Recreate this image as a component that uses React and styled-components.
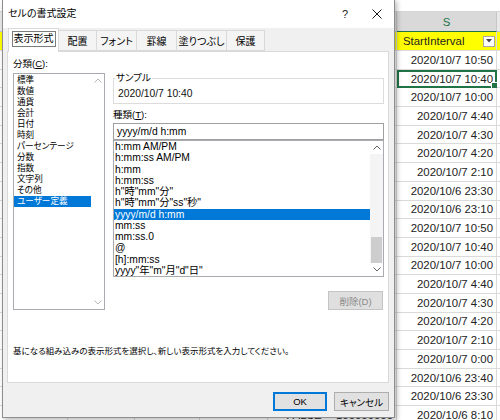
import React from 'react';
import styled, { createGlobalStyle } from 'styled-components';

const UI = `"Liberation Sans", "Noto Sans CJK JP", sans-serif`;

const GlobalStyle = createGlobalStyle`
  html, body { margin: 0; padding: 0; }
  body {
    width: 500px; height: 420px; overflow: hidden; background: #fff;
    font-family: ${UI};
  }
  #root { width: 500px; height: 420px; }
`;

const Stage = styled.div`
  position: relative;
  width: 500px;
  height: 420px;
  overflow: hidden;
`;

/* ---------- spreadsheet behind ---------- */
const COLS = '68px 67px 65px 68px 70px 59px 100px 60px';

const Sheet = styled.div`
  display: flex;
  flex-direction: column;
  font-family: ${UI};
`;

const TopBand = styled.div`
  height: 12px;
  background: #fff;
  border-bottom: 1px solid #d6d6d6;
  box-sizing: border-box;
`;

const SheetRow = styled.div`
  display: grid;
  grid-template-columns: ${COLS};
  height: ${p => p.$h}px;
  background: ${p => p.$bg || '#fff'};
`;

const ColHead = styled.div`
  display: flex;
  align-items: center;
  justify-content: center;
  font-size: 11.4px;
  color: ${p => (p.$sel ? '#217346' : '#444')};
  background: ${p => (p.$sel ? '#d9d9d9' : '#e9e9e9')};
  border-right: 1px solid #c6c6c6;
  border-bottom: 1px solid ${p => (p.$sel ? '#217346' : '#c6c6c6')};
  box-sizing: border-box;
`;

const Cell = styled.div`
  position: relative;
  display: flex;
  align-items: center;
  justify-content: ${p => p.$align || 'flex-end'};
  padding: 0 3px 0 6px;
  font-size: 11.4px;
  color: #222;
  white-space: nowrap;
  border-right: 1px solid #dadada;
  border-bottom: 1px solid #dadada;
  box-sizing: border-box;
  outline: ${p => (p.$active ? '2px solid #217346' : 'none')};
  outline-offset: -2px;
`;

const FillHandle = styled.span`
  position: absolute;
  right: -2px;
  bottom: -2px;
  width: 5px;
  height: 5px;
  background: #217346;
  border: 1px solid #fff;
`;

const HeaderCell = styled(Cell)`
  justify-content: space-between;
  padding: 0 0 0 6px;
  background: #ffff00;
`;

const FilterBtn = styled.span`
  display: flex;
  align-items: center;
  justify-content: center;
  width: 12px;
  height: 11px;
  margin-right: 1px;
  background: #fff;
  border: 1px solid #a8a8a8;
  box-sizing: border-box;
`;

/* ---------- dialog ---------- */
const Dialog = styled.div`
  position: absolute;
  left: 2px;
  top: -1px;
  width: 393px;
  height: 419px;
  box-sizing: border-box;
  border: 1px solid #8e8e8e;
  background: #f0f0f0;
  box-shadow: 2px 2px 5px rgba(0, 0, 0, 0.28);
  display: flex;
  flex-direction: column;
  font-family: ${UI};
  font-feature-settings: "palt";
  color: #000;
`;

const TitleBar = styled.div`
  height: 28px;
  flex: none;
  background: #fff;
  display: flex;
  align-items: center;
`;

const Title = styled.div`
  flex: 1;
  padding-left: 5px;
  font-size: 10px;
  line-height: 14px;
`;

const TitleBtn = styled.div`
  width: ${p => p.$w}px;
  height: 28px;
  display: flex;
  align-items: center;
  justify-content: center;
  font-size: 11px;
  color: #222;
`;

const TabStrip = styled.div`
  height: 23px;
  flex: none;
  display: flex;
  align-items: flex-end;
  padding-left: 5px;
  position: relative;
  z-index: 1;
`;

const Tab = styled.div`
  width: ${p => p.$w}px;
  height: ${p => (p.$sel ? 24 : 21)}px;
  margin-bottom: ${p => (p.$sel ? -1 : 0)}px;
  margin-left: ${p => (p.$first ? 0 : -1)}px;
  box-sizing: border-box;
  border: 1px solid #d9d9d9;
  border-bottom: ${p => (p.$sel ? 'none' : '1px solid #d9d9d9')};
  background: ${p => (p.$sel ? '#fff' : '#f4f4f4')};
  position: relative;
  z-index: ${p => (p.$sel ? 2 : 1)};
  display: flex;
  align-items: center;
  justify-content: center;
  padding-bottom: ${p => (p.$sel ? 3 : 0)}px;
  font-size: 10px;
  white-space: nowrap;
`;

const FocusRect = styled.span`
  display: block;
  width: 44px;
  height: 16px;
  box-sizing: border-box;
  border: 1px solid #7c7c7c;
  line-height: 14px;
  text-align: center;
`;

const Panel = styled.div`
  margin: 0 5px 0 4px;
  height: 332px;
  flex: none;
  box-sizing: border-box;
  background: #fff;
  border: 1px solid #d9d9d9;
  padding: 6px 4px 0 5px;
  display: grid;
  grid-template-columns: 92px 1fr;
  column-gap: 8px;
  align-items: start;
`;

const Column = styled.div`
  display: flex;
  flex-direction: column;
`;

const FieldLabel = styled.div`
  font-size: 9.5px;
  line-height: 12px;
  margin-top: ${p => p.$mt || 0}px;
  white-space: nowrap;
`;

const Key = styled.span`
  text-decoration: underline;
`;

const ListBox = styled.div`
  display: flex;
  height: ${p => p.$h}px;
  margin-top: ${p => p.$mt || 0}px;
  box-sizing: border-box;
  border: 1px solid #a9abb0;
  background: #fff;
  overflow: hidden;
`;

const Items = styled.div`
  flex: 1;
  min-width: 0;
  padding-top: ${p => p.$pt || 0}px;
`;

const Item = styled.div`
  height: ${p => p.$lh}px;
  line-height: ${p => p.$lh}px;
  padding-left: ${p => p.$pl}px;
  font-size: ${p => p.$fs}px;
  white-space: nowrap;
  background: ${p => (p.$sel ? '#0078d7' : 'transparent')};
  color: ${p => (p.$sel ? '#fff' : '#000')};
`;

const ScrollBar = styled.div`
  width: 13px;
  flex: none;
  display: flex;
  flex-direction: column;
  background: #fff;
`;

const Arrow = styled.div`
  height: 13px;
  flex: none;
  display: flex;
  align-items: center;
  justify-content: center;
`;

const Track = styled.div`
  flex: 1;
  display: flex;
  flex-direction: column;
  justify-content: flex-end;
  align-items: center;
  background: ${p => (p.$plain ? '#fff' : '#f4f4f4')};
`;

const Thumb = styled.div`
  width: 11px;
  height: 26px;
  background: #cdcdcd;
`;

const Group = styled.fieldset`
  margin: 14px 0 0;
  padding: 4px 5px 3px 4px;
  border: 1px solid #dcdcdc;
  min-width: 0;
`;

const Legend = styled.legend`
  margin-left: -3px;
  padding: 0 1px;
  font-size: 9.5px;
  line-height: 12px;
`;

const SampleText = styled.div`
  font-size: 10.3px;
  line-height: 12px;
  color: #111;
`;

const TextBox = styled.div`
  margin-top: 2px;
  height: 17px;
  box-sizing: border-box;
  border: 1px solid #a0a0a0;
  padding-left: 3px;
  font-size: 10.3px;
  line-height: 15px;
  background: #fff;
`;

const DelButton = styled.div`
  align-self: flex-end;
  margin: 14px 1px 0 0;
  width: 55px;
  height: 19px;
  box-sizing: border-box;
  border: 1px solid #c4c4c4;
  background: #dfdfdf;
  color: #8a8a8a;
  font-size: 9.5px;
  display: flex;
  align-items: center;
  justify-content: center;
`;

const Desc = styled.div`
  grid-column: 1 / -1;
  margin-top: 9px;
  font-size: 8.5px;
  line-height: 12px;
  white-space: nowrap;
`;

const ButtonBar = styled.div`
  flex: 1;
  display: flex;
  justify-content: flex-end;
  align-items: flex-start;
  gap: 7px;
  padding: 9px 5px 0 0;
`;

const DlgButton = styled.div`
  width: ${p => p.$w}px;
  height: 19px;
  box-sizing: border-box;
  border: 1px solid ${p => (p.$default ? '#0078d7' : '#adadad')};
  box-shadow: ${p => (p.$default ? 'inset 0 0 0 1px #0078d7' : 'none')};
  background: #e1e1e1;
  font-size: 9.5px;
  display: flex;
  align-items: center;
  justify-content: center;
`;

/* ---------- icons ---------- */
const Chevron = ({ up, color }) => (
  <svg width="8" height="5" viewBox="0 0 8 5">
    <polyline
      points={up ? '0.5,4.5 4,1 7.5,4.5' : '0.5,0.5 4,4 7.5,0.5'}
      fill="none"
      stroke={color}
      strokeWidth="1"
    />
  </svg>
);

const CloseIcon = () => (
  <svg width="10" height="10" viewBox="0 0 10 10">
    <path d="M0.5 0.5 L9.5 9.5 M9.5 0.5 L0.5 9.5" stroke="#1a1a1a" strokeWidth="1" />
  </svg>
);

const DropTri = () => (
  <svg width="6" height="4" viewBox="0 0 6 4">
    <path d="M0 0 L6 0 L3 3.5 Z" fill="#444" />
  </svg>
);

/* ---------- data ---------- */
const tabs = [
  { label: '表示形式', w: 51 },
  { label: '配置', w: 39 },
  { label: 'フォント', w: 41 },
  { label: '罫線', w: 41 },
  { label: '塗りつぶし', w: 51 },
  { label: '保護', w: 39 },
];

const categories = [
  '標準', '数値', '通貨', '会計', '日付', '時刻', 'パーセンテージ',
  '分数', '指数', '文字列', 'その他', 'ユーザー定義',
];

const formats = [
  'h:mm AM/PM',
  'h:mm:ss AM/PM',
  'h:mm',
  'h:mm:ss',
  'h"時"mm"分"',
  'h"時"mm"分"ss"秒"',
  'yyyy/m/d h:mm',
  'mm:ss',
  'mm:ss.0',
  '@',
  '[h]:mm:ss',
  'yyyy"年"m"月"d"日"',
];

const sValues = [
  '2020/10/7 10:50', '2020/10/7 10:40', '2020/10/7 10:00', '2020/10/7 4:40',
  '2020/10/7 4:30', '2020/10/7 4:20', '2020/10/7 2:10', '2020/10/6 23:30',
  '2020/10/6 23:10', '2020/10/7 10:50', '2020/10/7 10:40', '2020/10/7 10:00',
  '2020/10/7 4:40', '2020/10/7 4:30', '2020/10/7 4:20', '2020/10/7 2:10',
  '2020/10/7 0:00', '2020/10/6 23:40', '2020/10/6 23:30', '2020/10/6 8:10',
];

/* only column S's heading is visible beside the dialog */
const headings = ['', '', '', '', '', '', 'S', ''];

export default function App() {
  const last = sValues.length - 1;
  return (
    <Stage>
      <GlobalStyle />
      <Sheet>
        <TopBand />
        <SheetRow $h={20}>
          {headings.map((l, i) => (
            <ColHead key={i} $sel={l === 'S'}>{l}</ColHead>
          ))}
        </SheetRow>
        <SheetRow $h={19} $bg="#ffff00">
          {headings.slice(0, 6).map((l, i) => <Cell key={i} />)}
          <HeaderCell>
            StartInterval
            <FilterBtn><DropTri /></FilterBtn>
          </HeaderCell>
          <Cell />
        </SheetRow>
        {sValues.map((v, i) => (
          <SheetRow key={i} $h={18.7}>
            <Cell />
            <Cell />
            <Cell />
            <Cell />
            <Cell $align="center">{i === last ? 'FALSE' : ''}</Cell>
            <Cell>{i === last ? '100000000' : ''}</Cell>
            <Cell $active={i === 1}>
              {v}
              {i === 1 && <FillHandle />}
            </Cell>
            <Cell />
          </SheetRow>
        ))}
      </Sheet>

      <Dialog>
        <TitleBar>
          <Title>セルの書式設定</Title>
          <TitleBtn $w={30}>?</TitleBtn>
          <TitleBtn $w={34}><CloseIcon /></TitleBtn>
        </TitleBar>

        <TabStrip>
          {tabs.map((t, i) => (
            <Tab key={t.label} $w={t.w} $sel={i === 0} $first={i === 0}>
              {i === 0 ? <FocusRect>{t.label}</FocusRect> : t.label}
            </Tab>
          ))}
        </TabStrip>

        <Panel>
          <Column>
            <FieldLabel>分類(<Key>C</Key>):</FieldLabel>
            <ListBox $h={237} $mt={3}>
              <Items $pt={1}>
                {categories.map((c, i) => (
                  <Item key={c} $lh={11} $pl={3} $fs={8.6} $sel={i === categories.length - 1}>
                    {c}
                  </Item>
                ))}
              </Items>
              <ScrollBar>
                <Arrow><Chevron up color="#b8b8b8" /></Arrow>
                <Track $plain />
                <Arrow><Chevron color="#b8b8b8" /></Arrow>
              </ScrollBar>
            </ListBox>
          </Column>

          <Column>
            <Group>
              <Legend>サンプル</Legend>
              <SampleText>2020/10/7 10:40</SampleText>
            </Group>
            <FieldLabel $mt={5}>種類(<Key>T</Key>):</FieldLabel>
            <TextBox>yyyy/m/d h:mm</TextBox>
            <ListBox $h={137}>
              <Items>
                {formats.map((f, i) => (
                  <Item key={f} $lh={11.25} $pl={1} $fs={10.3} $sel={i === 6}>
                    {f}
                  </Item>
                ))}
              </Items>
              <ScrollBar>
                <Arrow><Chevron up color="#606060" /></Arrow>
                <Track><Thumb /></Track>
                <Arrow><Chevron color="#606060" /></Arrow>
              </ScrollBar>
            </ListBox>
            <DelButton>削除(D)</DelButton>
          </Column>

          <Desc>基になる組み込みの表示形式を選択し、新しい表示形式を入力してください。</Desc>
        </Panel>

        <ButtonBar>
          <DlgButton $w={54} $default>OK</DlgButton>
          <DlgButton $w={55}>キャンセル</DlgButton>
        </ButtonBar>
      </Dialog>
    </Stage>
  );
}
